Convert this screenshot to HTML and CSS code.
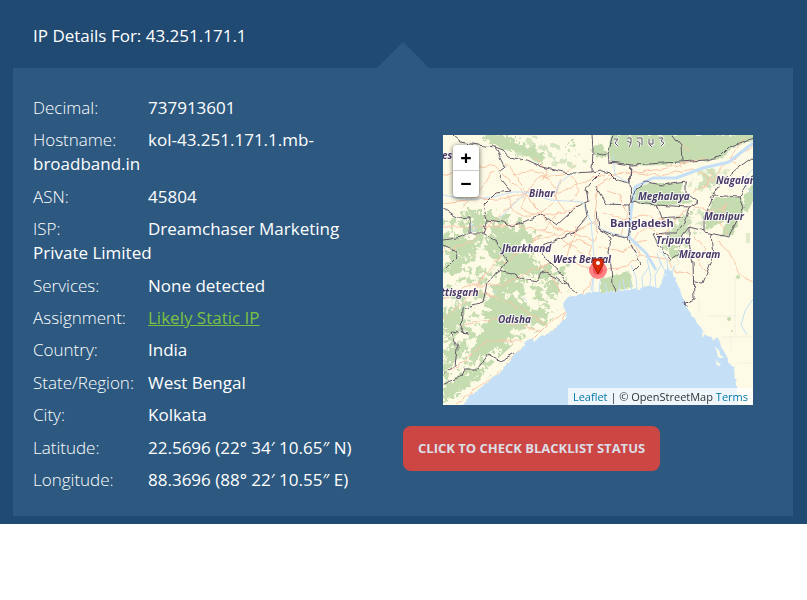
FILE: index.html
```html
<!DOCTYPE html>
<html lang="en">
<head>
<meta charset="utf-8">
<meta name="viewport" content="width=device-width, initial-scale=1">
<title>IP Details For: 43.251.171.1</title>
<link rel="stylesheet" href="styles.css">
</head>
<body>
<main class="lookup">
  <h1 class="lookup-title">IP Details For: 43.251.171.1</h1>
  <section class="panel">
    <ul class="details">
      <li><span class="label">Decimal:</span><span class="value">737913601</span></li>
      <li><span class="label">Hostname:</span><span class="value">kol-43.251.171.1.mb-broadband.in</span></li>
      <li><span class="label">ASN:</span><span class="value">45804</span></li>
      <li><span class="label">ISP:</span><span class="value">Dreamchaser Marketing Private Limited</span></li>
      <li><span class="label">Services:</span><span class="value">None detected</span></li>
      <li><span class="label">Assignment:</span><a class="assignment" href="#static">Likely Static IP</a></li>
      <li><span class="label">Country:</span><span class="value">India</span></li>
      <li><span class="label">State/Region:</span><span class="value">West Bengal</span></li>
      <li><span class="label">City:</span><span class="value">Kolkata</span></li>
      <li><span class="label">Latitude:</span><span class="value">22.5696 (22° 34′ 10.65″ N)</span></li>
      <li><span class="label">Longitude:</span><span class="value">88.3696 (88° 22′ 10.55″ E)</span></li>
    </ul>
    <div class="side">
      <div class="map">
        <svg class="tiles" viewBox="0 0 310 270" preserveAspectRatio="xMidYMid slice" aria-hidden="true">
          <defs>
            <filter id="jag" x="-5%" y="-5%" width="110%" height="110%">
              <feTurbulence type="fractalNoise" baseFrequency="0.14" numOctaves="1" seed="4" result="n"/>
              <feDisplacementMap in="SourceGraphic" in2="n" scale="6" xChannelSelector="R" yChannelSelector="G"/>
            </filter>
            <filter id="coast" x="-5%" y="-5%" width="110%" height="110%">
              <feTurbulence type="fractalNoise" baseFrequency="0.2" numOctaves="2" seed="9" result="n"/>
              <feDisplacementMap in="SourceGraphic" in2="n" scale="4" xChannelSelector="R" yChannelSelector="G"/>
            </filter>
            <filter id="leafy" x="-5%" y="-5%" width="110%" height="110%">
              <feTurbulence type="fractalNoise" baseFrequency="0.18" numOctaves="3" seed="7" result="n"/>
              <feDisplacementMap in="SourceGraphic" in2="n" scale="20" xChannelSelector="R" yChannelSelector="G"/>
            </filter>
            <filter id="speckle" x="-5%" y="-5%" width="110%" height="110%">
              <feTurbulence type="fractalNoise" baseFrequency="0.12" numOctaves="4" seed="12"/>
              <feColorMatrix values="0 0 0 0 1  0 0 0 0 1  0 0 0 0 1  14 0 0 0 -7.4" result="m"/>
              <feComposite in="SourceGraphic" in2="m" operator="in"/>
            </filter>
          </defs>
          <rect width="310" height="270" fill="#fdfbe6"/>
          <g fill="#c5dbb0">
            <g filter="url(#speckle)">
              <path d="M0 84L60 78L92 86L100 100L84 112L100 124L130 130L126 156L104 168L112 182L96 196L72 208L50 228L20 262L0 268Z"/>
              <path d="M38 0H90L146 22L140 34L100 30L60 14Z" opacity=".7"/>
              <path d="M224 84L262 72L258 100L240 128L218 116Z" opacity=".7"/>
              <path d="M254 34L290 34L270 60L244 52Z" opacity=".5"/>
            </g>
            <g filter="url(#leafy)">
              <path d="M40 0L62 0L84 12L104 20L100 27L80 20L62 14L48 8Z"/>
              <circle cx="128" cy="11" r="4"/>
              <path d="M20 74L40 78L66 82L62 88L44 90L22 84Z"/>
              <path d="M22 87L38 90L36 100L26 97Z"/>
              <path d="M0 100L20 102L38 108L30 122L10 120L0 112Z"/>
              <path d="M40 106L58 96L80 92L86 102L72 112L82 122L62 128L46 118Z"/>
              <path d="M2 128L14 120L26 126L18 138L4 136Z"/>
              <path d="M60 122L84 118L96 130L112 136L104 146L88 140L70 144L58 136Z"/>
              <path d="M102 146L114 148L112 162L104 160Z"/>
              <path d="M58 142L74 138L78 150L66 158L56 154Z"/>
              <path d="M40 166L58 158L72 164L90 178L84 192L70 196L62 212L50 216L36 222L28 228L24 222L36 204L44 186Z"/>
              <path d="M0 180L14 170L20 178L17 196L4 200L0 206Z"/>
              <path d="M2 218L12 206L22 212L16 224L4 232Z"/>
              <path d="M0 252L16 240L30 236L44 232L38 242L22 252L10 262L0 264Z"/>
              <path d="M96 166L108 166L104 174Z"/>
              <path d="M72 172L112 178L96 186L78 180Z"/>
              <path d="M258 38L272 36L278 48L266 54L256 48Z" opacity=".8"/>
              <path d="M240 82L250 74L246 94L236 108L228 100Z" opacity=".8"/>
              <path d="M228 110L238 112L232 126L222 118Z"/>
            </g>
            <g filter="url(#coast)">
              <path d="M168 0H310V6L290 12L278 24L240 28L220 30L190 31L168 27L165 14Z"/>
              <path d="M148 14L158 8L164 20L154 24Z"/>
              <path d="M190 66L194 53L206 48L240 48L238 56L250 68L226 70L212 71Z"/>
              <path d="M262 96L262 84L272 62L298 62L302 74L290 100L278 102L284 84Z"/>
              <path d="M302 60L310 48V66L304 78L300 72Z"/>
              <path d="M158 144L186 136L190 152L174 156L158 158Z"/>
            </g>
            <circle cx="295" cy="142" r="2"/><circle cx="286" cy="184" r="2"/><circle cx="289" cy="196" r="1"/><rect x="303" y="98" width="4" height="10" opacity=".5"/>
          </g>
          <g class="road" filter="url(#jag)">
            <path d="M0 40L24 34L50 30L80 57L110 92L153 106M0 68L25 65L60 64L84 57L115 58L150 42L186 38L220 34L262 22"/>
            <path d="M62 28L84 57L78 74L92 80L122 78L140 68M84 57L96 42L120 40L132 30M84 57L66 72L48 88L30 106L0 118"/>
            <path d="M70 40Q90 30 106 44T108 70T80 80T66 60M50 36L36 56L20 72M10 46L30 60L44 64M118 44L112 62L122 76"/>
            <path d="M0 92L40 92L72 90L108 98L130 112L150 128L155 136M90 106L104 92L116 76M60 128L90 106L130 96L152 88"/>
            <path d="M0 164L26 150L60 150L90 134L120 124L155 136M0 156L40 158L74 172L104 190L124 176L148 148L155 136"/>
            <path d="M104 190L90 204L70 222L54 240L30 256L12 270M20 190L50 184L76 190L98 196M8 236L28 220L44 206L80 206M0 184L22 166L50 130L66 110"/>
            <path d="M155 136L146 118L154 100L152 78L156 50L172 40L192 38L216 40L250 34L270 46L280 30L310 12"/>
            <path d="M155 136L184 132L198 120L190 104L204 92L220 100L232 84L250 70L262 76L282 72M198 120L224 124L232 136L252 140"/>
            <path d="M160 78L180 84L200 80L224 86M164 56L176 60L184 78L178 100M156 112L178 116L204 104M252 100L262 114L254 126L268 140M250 58L264 50L268 36M284 68L276 84L284 100"/>
            <path d="M276 106L290 124L298 140L310 146M302 2L288 22L296 34M236 8L246 16M118 158L110 142L96 130M130 170L112 196"/>
            <path d="M128 40L136 56L128 66M120 112L134 104L148 110M134 90L128 110L124 124M18 26L28 44L24 64M90 22L104 34L100 44"/>
          </g>
          <g class="river">
            <path class="wide" d="M310 8L286 27L260 33L233 43L210 43L192 52L188 76L186 102L203 118L213 135"/>
            <path d="M0 60L25 65L50 62L70 57L84 57L107 65L140 67L147 85L160 95L186 103M84 57L66 74L56 84M130 38L116 48L112 60M310 34L304 40L302 52L310 58M310 164L302 176L298 190L304 200M148 86L150 110L152 134L148 156M170 20L172 40L186 48"/>
            <path d="M28 88L34 94L28 98ZM50 158L54 156M80 162L84 166"/>
          </g>
          <g class="grid">
            <path d="M256 164V178M265 181H292V140M278 202H310M292 180V202M294 228H310M288 202V216"/>
          </g>
          <g filter="url(#coast)">
            <path fill="#c5dff6" d="M17 274L27 261L40 251L57 238L72 219L85 208L104 199L112 194L124 181L120 168L125 162L144 158L153 158L173 157L190 154L196 155L203 151L216 153L220 143L225 132L231 141L236 154L243 171L253 186L263 201L275 203L278 211L285 224L291 234L296 274Z"/>
            <path fill="#c5dff6" d="M80 208L90 203L92 206L84 211Z"/>
            <path fill="#fdfbe6" d="M272 210L276 216L280 224L275 222ZM272 225L278 228L275 231ZM258 196L262 198L260 202ZM268 198L272 202L270 206Z"/>
          </g>
          <g class="delta">
            <path d="M189 156L187 146M194 156L193 142L188 130M200 154L199 142L206 132M206 154L208 142L204 124M213 154L212 140L218 130L214 118M219 150L222 136L216 124M225 140L224 124L216 114M150 158V144M156 158L157 146M164 158L162 148M175 158L177 146M182 156L180 144M228 140L232 130"/>
          </g>
          <g class="border" filter="url(#jag)">
            <path d="M10 1L17 7L34 10L52 12L60 15L65 22L84 25L100 32L120 37L130 38L149 37L157 35L166 38L173 45L186 48L188 32"/>
            <path d="M52 12L62 32L55 37L59 45L68 56L52 58L40 70L44 85M0 73L14 82L27 83L27 98L40 98L44 85L60 87L69 92L85 85L100 80L114 90L127 78L140 67L145 65L143 55L147 48L157 38"/>
            <path d="M0 105L14 103L27 98M0 110L12 115L14 122L4 132M40 98L54 107L60 118L64 127L57 136"/>
            <path d="M142 67L144 82L130 98L114 105L100 110L99 118L107 128L117 137L125 151L134 158"/>
            <path d="M55 136L69 139L79 144L94 147L99 136L114 143L125 151M55 136L44 148L40 168L20 174L19 198L25 199L9 196L14 214L12 231L0 239M0 249L19 241L22 234L34 234L45 219L57 226L72 218"/>
            <path d="M149 0L150 15L149 37M153 20L165 18L166 27L190 30L220 28L236 27L263 25L276 22L286 12L310 3M165 18L170 0M239 26L238 10L230 0"/>
            <path d="M188 30L187 48L188 67L186 70L163 69L153 52M186 70L187 92L185 103L170 100L156 94M156 94L154 76M156 94L168 102L166 118L168 131L169 150L173 157"/>
            <path d="M188 67L193 53L203 47L220 50L243 47L243 58L255 67L246 72L213 70L188 67M213 70L218 84L240 82M246 72L241 88L233 98L221 98L210 100L215 110L221 117L228 125L235 120L240 100L246 92L246 108L250 128L251 164L242 167L243 171"/>
            <path d="M268 62L280 45L296 32L310 22M271 60L296 62L310 40M296 62L300 73L286 102L261 97L261 83L271 60M246 92L262 96M268 98L270 122L265 135L260 148L251 147M185 103L198 128L190 136"/>
          </g>
          <g class="place">
            <text x="-7" y="24">des</text>
            <text x="86" y="62">Bihar</text>
            <text x="59" y="117">Jharkhand</text>
            <text x="110" y="128">West Bengal</text>
            <text x="-8" y="161">attisgarh</text>
            <text x="55" y="188">Odisha</text>
            <text x="195" y="65">Meghalaya</text>
            <text x="273" y="49">Nagaland</text>
            <text x="261" y="85">Manipur</text>
            <text x="213" y="109">Tripura</text>
            <text x="236" y="123">Mizoram</text>
            <text class="country" x="167" y="92">Bangladesh</text>
          </g>
          <path class="script-halo" d="M171 4h4l-3 4 3 3M184 3h4v5l-2 4m-2-6 4 2M194 3h5v7m-5-4 3 2-1 4M206 4v5h4V4m-4 5 3 3M216 3h4l-2 3 3 2-3 3"/>
          <path class="script" d="M171 4h4l-3 4 3 3M184 3h4v5l-2 4m-2-6 4 2M194 3h5v7m-5-4 3 2-1 4M206 4v5h4V4m-4 5 3 3M216 3h4l-2 3 3 2-3 3"/>
        </svg>
        <svg class="marker" viewBox="0 0 20 24" aria-hidden="true">
          <circle cx="10" cy="13" r="9" fill="#ff5a64" opacity=".75"/>
          <circle cx="10" cy="13" r="5" fill="#f53c46" opacity=".7"/>
          <path d="M5 2h10v6l-5 9-5-9z" fill="#d92b08" stroke="#a81c02"/>
          <circle cx="10" cy="6" r="2" fill="#fff"/>
        </svg>
        <div class="zoom">
          <button type="button" aria-label="Zoom in">+</button>
          <button type="button" aria-label="Zoom out">−</button>
        </div>
        <div class="credit"><a href="#leaflet">Leaflet</a> | © OpenStreetMap <a href="#terms">Terms</a></div>
      </div>
      <button class="check" type="button">CLICK TO CHECK BLACKLIST STATUS</button>
    </div>
  </section>
</main>
</body>
</html>
```
FILE: styles.css
```css
* {
  box-sizing: border-box;
}

body {
  margin: 0;
  background: #fff;
  color: #fff;
  font-family: "Open Sans", sans-serif;
  font-size: 17px;
  line-height: 24px;
}

.lookup {
  padding: 24px 14px 8px 13px;
  background: #204a72;
}

.lookup-title {
  margin: 0 20px 20px;
  font-size: 17px;
  font-weight: 400;
}

.panel {
  position: relative;
  display: grid;
  grid-template-columns: 1fr 1fr;
  padding: 28px 20px 24px;
  background: #2d5980;
}

/* Pointer on the panel's top edge */
.panel::before {
  content: "";
  position: absolute;
  bottom: 100%;
  left: 50%;
  width: 52px;
  height: 26px;
  margin-left: -26px;
  background: #2d5980;
  clip-path: polygon(50% 0, 100% 100%, 0 100%);
}

.details {
  display: flex;
  flex-direction: column;
  justify-content: space-between;
  margin: 0;
  padding: 0 20px 0 0;
  list-style: none;
}

.label {
  display: inline-block;
  min-width: 115px;
  font-weight: 300;
}

.value {
  font-weight: 500;
}

.assignment {
  color: #7ac143;
}

.side {
  padding: 39px 0 21px;
}

.map {
  position: relative;
  height: 270px;
  margin: 0 20px 21px 40px;
  overflow: hidden;
  background: #fdfbe6;
}

.tiles {
  display: block;
  width: 100%;
  height: 100%;
}

.tiles path {
  stroke-linejoin: round;
}

.road {
  fill: none;
  stroke: #f9c6a8;
  stroke-width: 1px;
}

.river,
.delta {
  fill: none;
  stroke: #c5dff6;
  stroke-width: 1px;
}

.wide {
  stroke-width: 3px;
}

.grid {
  fill: none;
  stroke: #f2efdf;
}

.border {
  fill: none;
  stroke: #655a6b;
  stroke-width: 1px;
}

.place {
  fill: #4a3a6a;
  stroke: #fff;
  stroke-opacity: 0.7;
  stroke-width: 2px;
  paint-order: stroke;
  font-size: 10px;
  font-style: italic;
  font-weight: 700;
}

.country {
  font-size: 11px;
  font-style: normal;
  font-weight: 700;
}

.script {
  fill: none;
  stroke: #655a6b;
}

.script-halo {
  fill: none;
  stroke: #fff;
  stroke-opacity: 0.7;
  stroke-width: 3px;
}

.marker {
  position: absolute;
  top: 45%;
  left: 50%;
  width: 20px;
  height: 24px;
  margin-left: -10px;
}

.zoom {
  position: absolute;
  top: 10px;
  left: 10px;
  width: 26px;
  border-radius: 4px;
  background: #fff;
  box-shadow: 0 1px 5px rgba(0, 0, 0, 0.65);
}

.zoom button {
  display: block;
  width: 26px;
  height: 26px;
  padding: 0;
  border: 0;
  background: transparent;
  color: #000;
  font: bold 20px/24px "Open Sans", sans-serif;
}

.zoom button:first-child {
  border-bottom: 1px solid #ccc;
}

.credit {
  position: absolute;
  right: 0;
  bottom: 0;
  padding: 0 5px;
  background: rgba(255, 255, 255, 0.7);
  color: #333;
  font-size: 11px;
  line-height: 17px;
  white-space: nowrap;
}

.credit a {
  color: #0078a8;
  text-decoration: none;
}

.check {
  display: block;
  padding: 14px 15px;
  border: 0;
  border-radius: 8px;
  background: #cc4744;
  color: #dcdee6;
  font: 700 13px/17px "Open Sans", sans-serif;
}
```
